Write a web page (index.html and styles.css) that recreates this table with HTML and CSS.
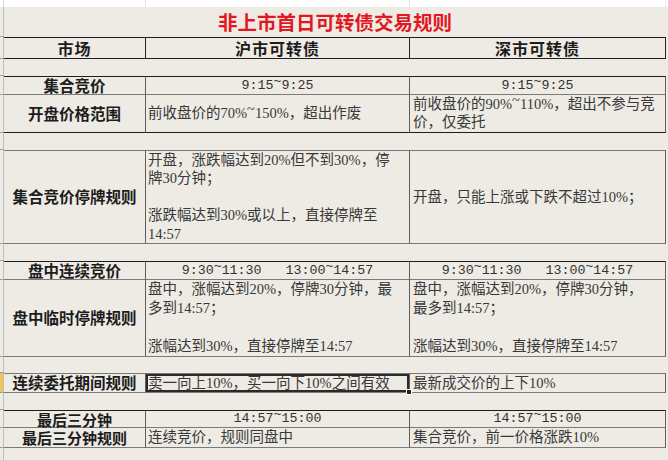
FILE: index.html
```html
<!DOCTYPE html>
<html lang="zh-CN">
<head>
<meta charset="utf-8">
<title>非上市首日可转债交易规则</title>
<link rel="stylesheet" href="styles.css">
</head>
<body>
<div class="sheet">
  <div class="row h7 strip"><div class="rh"></div><div class="sc"></div><div class="sc"></div><div class="sc last"></div><div></div></div>
  <div class="row h30"><div class="rh"></div><div class="title">非上市首日可转债交易规则</div><div></div></div>
  <div class="row h22 dark-top dark-bottom"><div class="rh"></div><div class="c lab hd">市场</div><div class="c lab hd">沪市可转债</div><div class="c lab hd">深市可转债</div><div></div></div>
  <div class="row h17"><div class="rh"></div></div>
  <div class="row h19 dark-top"><div class="rh"></div><div class="c lab">集合竞价</div><div class="c ctr"><span>9:15<span class="tl">~</span>9:25</span></div><div class="c ctr"><span>9:15<span class="tl">~</span>9:25</span></div><div></div></div>
  <div class="row h38 dark-bottom"><div class="rh"></div><div class="c lab">开盘价格范围</div><div class="c txt"><span>前收盘价的70%<span class="tl">~</span>150%，超出作废</span></div><div class="c txt r"><div class="lines l18">前收盘价的90%<span class="tl">~</span>110%，超出不参与竞<br>价，仅委托</div></div><div></div></div>
  <div class="row h17"><div class="rh"></div></div>
  <div class="row h94 gray-top"><div class="rh"></div><div class="c lab">集合竞价停牌规则</div><div class="c txt"><div class="lines l184">开盘，涨跌幅达到20%但不到30%，停<br>牌30分钟；<br>&nbsp;<br>涨跌幅达到30%或以上，直接停牌至<br>14:57</div></div><div class="c txt r">开盘，只能上涨或下跌不超过10%；</div><div></div></div>
  <div class="row h17"><div class="rh"></div></div>
  <div class="row h19 dark-top"><div class="rh"></div><div class="c lab">盘中连续竞价</div><div class="c ctr"><span>9:30<span class="tl">~</span>11:30&nbsp;&nbsp;&nbsp;13:00<span class="tl">~</span>14:57</span></div><div class="c ctr"><span>9:30<span class="tl">~</span>11:30&nbsp;&nbsp;&nbsp;13:00<span class="tl">~</span>14:57</span></div><div></div></div>
  <div class="row h77"><div class="rh"></div><div class="c lab">盘中临时停牌规则</div><div class="c txt"><div class="lines l19">盘中，涨幅达到20%，停牌30分钟，最<br>多到14:57；<br>&nbsp;<br>涨幅达到30%，直接停牌至14:57</div></div><div class="c txt r"><div class="lines l19">盘中，涨幅达到20%，停牌30分钟，<br>最多到14:57；<br>&nbsp;<br>涨幅达到30%，直接停牌至14:57</div></div><div></div></div>
  <div class="row h16"><div class="rh"></div></div>
  <div class="row h20 gray-top"><div class="rh sel-row"></div><div class="c lab">连续委托期间规则</div><div class="c txt sel">卖一向上10%，买一向下10%之间有效</div><div class="c txt r">最新成交价的上下10%</div><div></div></div>
  <div class="row h17"><div class="rh"></div></div>
  <div class="row h18 dark-top"><div class="rh"></div><div class="c lab sm">最后三分钟</div><div class="c ctr"><span>14:57<span class="tl">~</span>15:00</span></div><div class="c ctr"><span>14:57<span class="tl">~</span>15:00</span></div><div></div></div>
  <div class="row h20"><div class="rh"></div><div class="c lab sm">最后三分钟规则</div><div class="c txt">连续竞价，规则同盘中</div><div class="c txt r">集合竞价，前一价格涨跌10%</div><div></div></div>
  <div class="row rest"><div class="rh"></div></div>
</div>
</body>
</html>
```

FILE: styles.css
```css
html, body {
  margin: 0;
  padding: 0;
  background: #edebe4;
}

body {
  font-family: "Noto Sans CJK SC", sans-serif;
  color: #2a2a2a;
}

.sheet {
  display: flex;
  flex-direction: column;
  min-height: 460px;
  width: 668px;
  overflow: hidden;
}

.row {
  display: grid;
  grid-template-columns: 4px 142px 264px 256px 1fr;
  box-sizing: border-box;
}

.h7 { height: 7px; }
.h16 { height: 16px; }
.h17 { height: 17px; }
.h18 { height: 18px; }
.h19 { height: 19px; }
.h20 { height: 20px; }
.h22 { height: 22px; }
.h30 { height: 30px; }
.h38 { height: 38px; }
.h77 { height: 77px; }
.h94 { height: 94px; }
.rest { flex: 1; }

.rh {
  box-sizing: border-box;
  border-right: 1px solid #b6bfcc;
  border-bottom: 1px solid #9c9c9c;
}

.rest .rh { border-bottom: none; }

.sel-row { background: #f3c553; }

.strip { background: #ffffff; }
.strip .rh { border-bottom: none; border-right-color: #d6dbe2; }
.sc { border-right: 1px solid #e2e2e2; }
.sc.last { border-right-color: #ececec; }

.title {
  grid-column: 2 / 5;
  display: flex;
  align-items: center;
  justify-content: center;
  font-family: "Noto Sans CJK SC", sans-serif;
  font-weight: 700;
  font-size: 19.5px;
  line-height: 1;
  color: #e2171f;
}

.c {
  box-sizing: border-box;
  display: flex;
  align-items: center;
  border-right: 1px solid #5e5e5e;
  border-bottom: 1px solid #7a7a7a;
  white-space: nowrap;
  min-width: 0;
  line-height: 1;
}

.dark-top .c { border-top: 1px solid #1e1e1e; }
.gray-top .c { border-top: 1px solid #777777; }
.dark-bottom .c { border-bottom-color: #1e1e1e; }
.h22 .c { border-right-color: #262626; }

.lab {
  justify-content: center;
  font-weight: 700;
  font-size: 15.5px;
  color: #1c1c1c;
}

.lab.sm { font-size: 15px; }

.lab.hd {
  font-size: 16px;
  letter-spacing: 1px;
}

.txt {
  padding-left: 2px;
  font-family: "Liberation Serif", "Noto Sans CJK SC", serif;
  font-size: 14.5px;
  font-weight: 400;
  color: #383838;
}

.txt.r { padding-left: 3px; }

.ctr {
  justify-content: center;
  font-family: "Liberation Mono", "Noto Sans CJK SC", monospace;
  font-size: 13.3px;
  color: #333333;
}

.tl {
  vertical-align: 0.3em;
  line-height: 0;
}

.lines { line-height: 18px; }
.lines.l18 { line-height: 17.5px; }
.lines.l184 { line-height: 18.4px; }
.lines.l19 { line-height: 19px; }

.sel {
  position: relative;
  box-shadow: inset 0 0 0 2px #2a2a2a;
}

.sel::after {
  content: "";
  position: absolute;
  right: -3px;
  bottom: -3px;
  width: 4px;
  height: 4px;
  background: #222222;
  border: 1px solid #ffffff;
  z-index: 2;
}
```
